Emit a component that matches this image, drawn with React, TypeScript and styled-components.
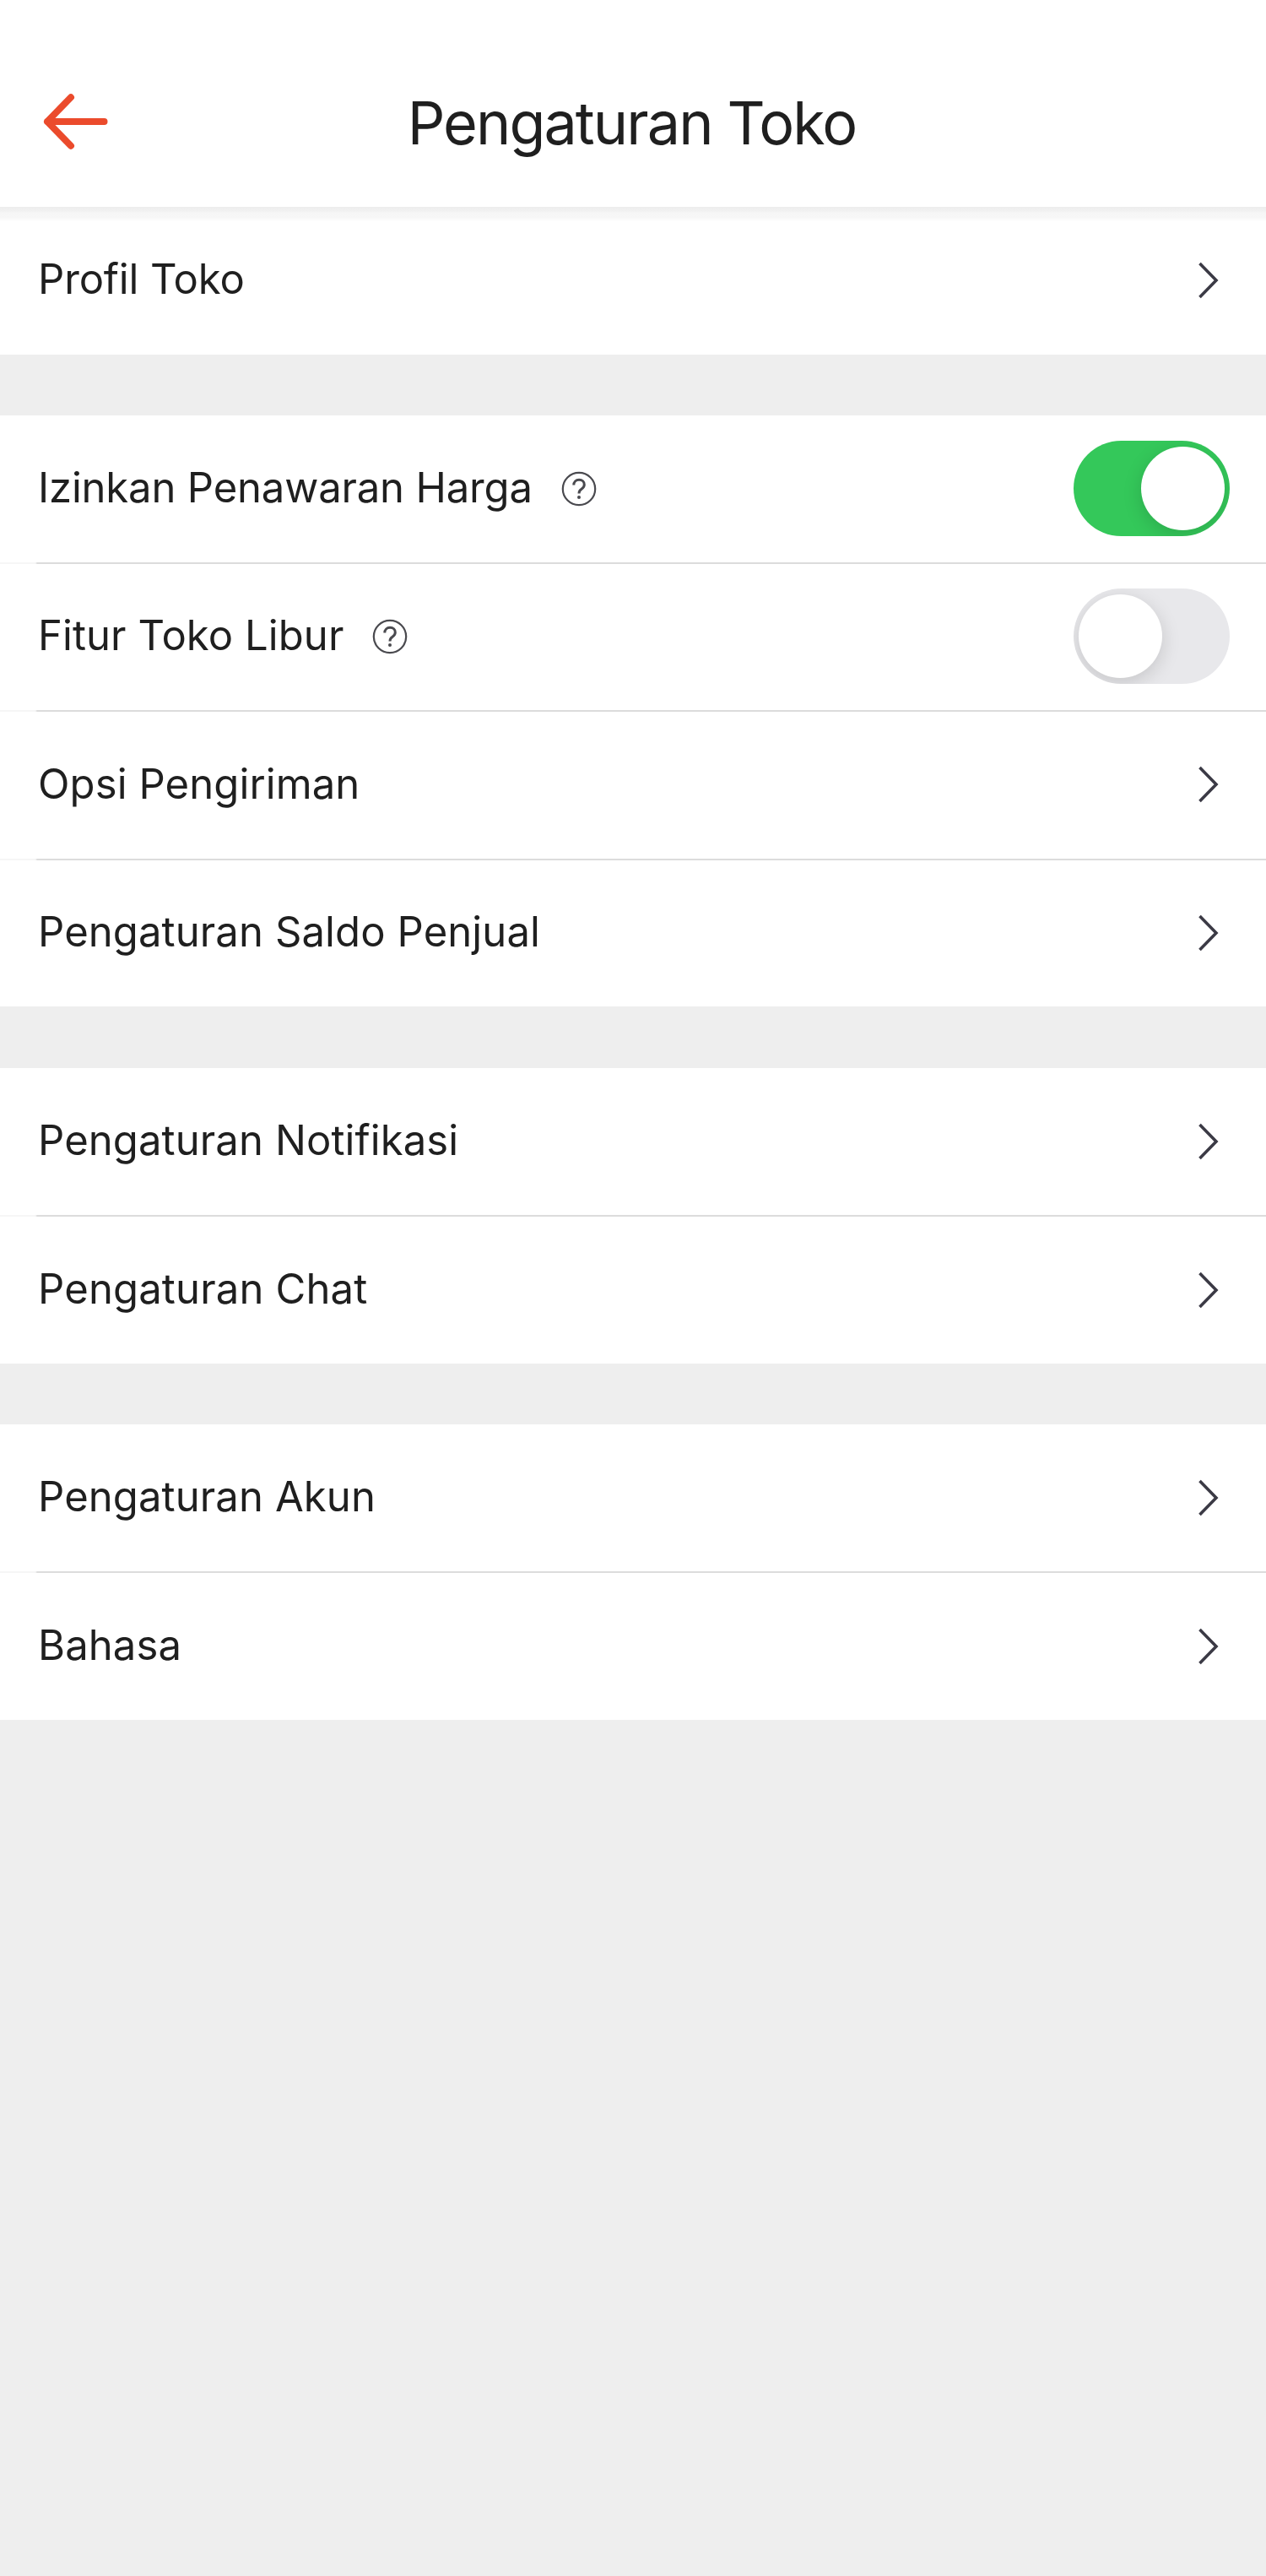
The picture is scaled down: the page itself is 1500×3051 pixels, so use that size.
import React, { useState } from "react";
import styled, { createGlobalStyle } from "styled-components";

const GlobalStyle = createGlobalStyle`
  * { box-sizing: border-box; }
  body { margin: 0; background: #eeeeee; }
`;

const Screen = styled.div`
  display: flex;
  flex-direction: column;
  width: 1500px;
  min-height: 3051px;
  background: #eeeeee;
  color: #1f1f1f;
  font-family: Inter, "Liberation Sans", sans-serif;
`;

const Header = styled.header`
  display: grid;
  grid-template-columns: 150px 1fr 150px;
  align-items: center;
  height: 245px;
  padding-top: 43px;
  background: #fff;
`;

const BackButton = styled.button`
  display: flex;
  margin: 0 0 0 48px;
  padding: 0;
  width: 84px;
  border: 0;
  background: none;
`;

const Title = styled.h1`
  margin: 0;
  padding: 3px 3px 0 0;
  text-align: center;
  font-size: 70px;
  font-weight: 400;
  line-height: 84px;
  letter-spacing: -1.9px;
`;

const HeaderShadow = styled.div`
  height: 17px;
  background: linear-gradient(#ededed 0, #f1f1f1 5px, #f6f6f6 7px, #f7f7f7 13px, #fff 17px);
`;

const Group = styled.section<{ $height: number; $gap: number }>`
  display: flex;
  flex-direction: column;
  height: ${(p) => p.$height}px;
  margin-bottom: ${(p) => p.$gap}px;
  background: #fff;
`;

const Row = styled.div`
  flex: 1 1 0;
  display: flex;
  align-items: center;
  padding: 0 43px 1px 45px;
`;

const Divider = styled.div`
  flex: none;
  height: 2px;
  background: linear-gradient(90deg, #f6f6f6 42px, #dcdcdc 44px);
`;

const Label = styled.span<{ $tracking: number }>`
  padding-bottom: 1px;
  font-size: 49px;
  line-height: 60px;
  letter-spacing: ${(p) => p.$tracking}px;
  white-space: nowrap;
`;

const Help = styled.svg`
  display: block;
  flex: none;
  margin: 1px 0 0 34px;
`;

const Trailing = styled.div<{ $inset: number }>`
  display: flex;
  margin-left: auto;
  margin-right: ${(p) => p.$inset}px;
`;

const Track = styled.button<{ $on: boolean }>`
  display: flex;
  justify-content: ${(p) => (p.$on ? "flex-end" : "flex-start")};
  width: 185px;
  height: 113px;
  padding: 7px 6px;
  border: 0;
  border-radius: 57px;
  overflow: hidden;
  background: ${(p) => (p.$on ? "#34c85a" : "#e8e8eb")};
`;

const Knob = styled.span`
  width: 99px;
  height: 99px;
  border-radius: 50%;
  background: #fff;
  box-shadow: 0 6px 22px rgba(0, 0, 0, 0.15);
`;

const BackIcon = () => (
  <svg width="84" height="72" viewBox="0 0 84 72" fill="none" stroke="#eb4b2c" strokeWidth="8" strokeLinecap="round" strokeLinejoin="round">
    <path d="M36 7.300 8 36l28 28.700M8 36h67.500" />
  </svg>
);

const Chevron = () => (
  <svg width="26" height="46" viewBox="0 0 26 46" fill="none" stroke="#3b3a45" strokeWidth="3.600">
    <path d="M2.500 3 22 23 2.500 43" />
  </svg>
);

const HelpIcon = () => (
  <Help width="42" height="42" viewBox="0 0 42 42" fill="none" stroke="#4a4a4f">
    <circle cx="21" cy="21" r="19.200" strokeWidth="2.200" />
    <path d="M14.800 16.600c0-3.800 2.600-6.300 6.300-6.300s6.200 2.400 6.200 5.700c0 2.500-1.300 3.900-3.300 5.300-2.200 1.500-3 2.700-3 5.300" strokeWidth="3" />
    <circle cx="21" cy="31" r="2" fill="#4a4a4f" stroke="none" />
  </Help>
);

interface Item {
  label: string;
  tracking?: number;
  toggle?: boolean;
}

const groups: { height: number; gap: number; items: Item[] }[] = [
  { height: 158, gap: 72, items: [{ label: "Profil Toko", tracking: -0.15 }] },
  {
    height: 700,
    gap: 73,
    items: [
      { label: "Izinkan Penawaran Harga", tracking: -0.17, toggle: true },
      { label: "Fitur Toko Libur", tracking: 0.08, toggle: false },
      { label: "Opsi Pengiriman" },
      { label: "Pengaturan Saldo Penjual" },
    ],
  },
  { height: 350, gap: 72, items: [{ label: "Pengaturan Notifikasi" }, { label: "Pengaturan Chat", tracking: 0.15 }] },
  { height: 350, gap: 0, items: [{ label: "Pengaturan Akun" }, { label: "Bahasa" }] },
];

const Toggle = ({ initial }: { initial: boolean }) => {
  const [on, setOn] = useState(initial);
  return (
    <Track type="button" role="switch" aria-checked={on} $on={on} onClick={() => setOn(!on)}>
      <Knob />
    </Track>
  );
};

const SettingRow = ({ label, tracking = 0.1, toggle }: Item) => (
  <Row>
    <Label $tracking={tracking}>{label}</Label>
    {toggle !== undefined && <HelpIcon />}
    <Trailing $inset={toggle === undefined ? 12 : 0.5}>
      {toggle === undefined ? <Chevron /> : <Toggle initial={toggle} />}
    </Trailing>
  </Row>
);

const FirstGroup = styled(Group)`
  padding-bottom: 18px;
`;

export default function App() {
  return (
    <Screen>
      <GlobalStyle />
      <Header>
        <BackButton type="button">
          <BackIcon />
        </BackButton>
        <Title>Pengaturan Toko</Title>
      </Header>
      <HeaderShadow />
      {groups.map((group, g) => {
        const Section = g === 0 ? FirstGroup : Group;
        return (
          <Section key={g} $height={group.height} $gap={group.gap}>
            {group.items.map((item, i) => (
              <React.Fragment key={item.label}>
                {i > 0 && <Divider />}
                <SettingRow {...item} />
              </React.Fragment>
            ))}
          </Section>
        );
      })}
    </Screen>
  );
}
